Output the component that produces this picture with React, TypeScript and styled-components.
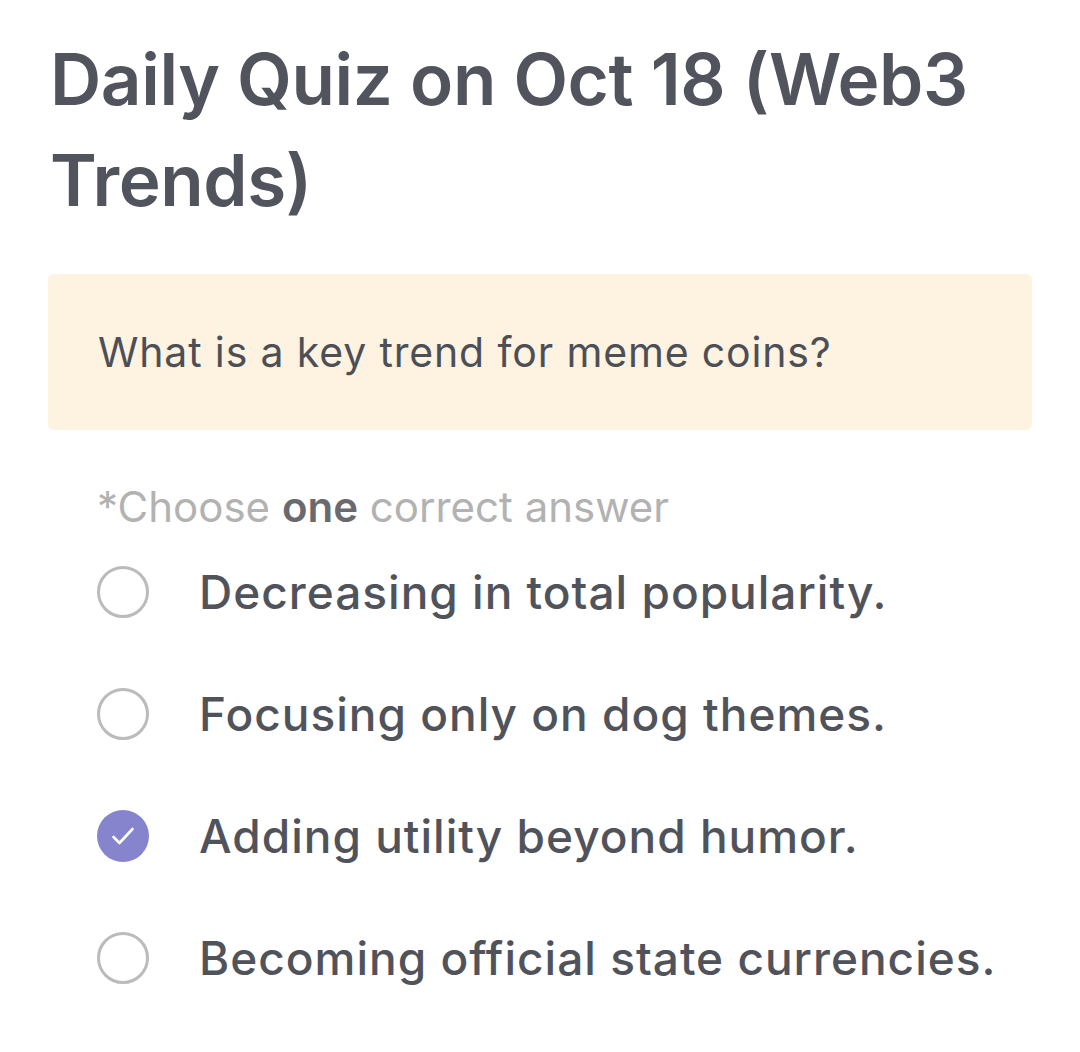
import React from "react";
import styled, { createGlobalStyle } from "styled-components";

const Global = createGlobalStyle`
  html, body { margin: 0; padding: 0; background: #ffffff; }
  body { font-family: Inter, "Noto Sans", sans-serif; }
`;

const Page = styled.main`
  padding: 29px 48px 20px 48px;
  display: flex;
  flex-direction: column;
`;

const Title = styled.h1`
  margin: 0 0 0 2px;
  font-size: 71px;
  line-height: 101px;
  font-weight: 600;
  color: #52545d;
  letter-spacing: -0.4px;
`;

const QuestionBox = styled.section`
  margin-top: 43px;
  background: #fef3e1;
  border-radius: 6px;
  height: 156px;
  display: flex;
  align-items: center;
  padding: 0 50px;
`;

const QuestionText = styled.p`
  margin: 0;
  font-size: 41px;
  letter-spacing: 0.85px;
  font-weight: 400;
  color: #4d4f57;
`;

const Hint = styled.p`
  margin: 53px 0 0 49px;
  font-size: 42px;
  line-height: 48px;
  color: #b2b2b2;
  font-weight: 400;
`;

const Strong = styled.span`
  color: #6a6a6e;
  font-weight: 600;
`;

const Options = styled.ul`
  list-style: none;
  margin: 0;
  padding: 0 0 0 49px;
  display: flex;
  flex-direction: column;
`;

const Row = styled.li`
  display: flex;
  align-items: center;
  gap: 50px;
  height: 122px;
`;

const Radio = styled.span<{ $checked?: boolean }>`
  flex: none;
  width: 52px;
  height: 52px;
  box-sizing: border-box;
  border-radius: 50%;
  border: ${(p) => (p.$checked ? "none" : "3px solid #bbbbbb")};
  background: ${(p) => (p.$checked ? "#8684cd" : "transparent")};
  display: flex;
  align-items: center;
  justify-content: center;
  & > svg { flex: none; display: block; }
`;

const Label = styled.span`
  font-size: 46px;
  letter-spacing: 1px;
  font-weight: 500;
  color: #51535b;
  white-space: nowrap;
`;

const options = [
  { text: "Decreasing in total popularity.", checked: false },
  { text: "Focusing only on dog themes.", checked: false },
  { text: "Adding utility beyond humor.", checked: true },
  { text: "Becoming official state currencies.", checked: false },
];

const Check = () => (
  <svg width="24" height="24" viewBox="0 0 24 24" fill="none" stroke="#ffffff" strokeWidth="2.6" strokeLinecap="round" strokeLinejoin="round">
    <path d="M2.5 13l6 6L21.5 5" />
  </svg>
);

export default function App() {
  return (
    <>
      <Global />
      <Page>
        <Title>Daily Quiz on Oct 18 (Web3 Trends)</Title>
        <QuestionBox>
          <QuestionText>What is a key trend for meme coins?</QuestionText>
        </QuestionBox>
        <Hint>
          *Choose <Strong>one</Strong> correct answer
        </Hint>
        <Options>
          {options.map((o) => (
            <Row key={o.text}>
              <Radio $checked={o.checked}>{o.checked && <Check />}</Radio>
              <Label>{o.text}</Label>
            </Row>
          ))}
        </Options>
      </Page>
    </>
  );
}
